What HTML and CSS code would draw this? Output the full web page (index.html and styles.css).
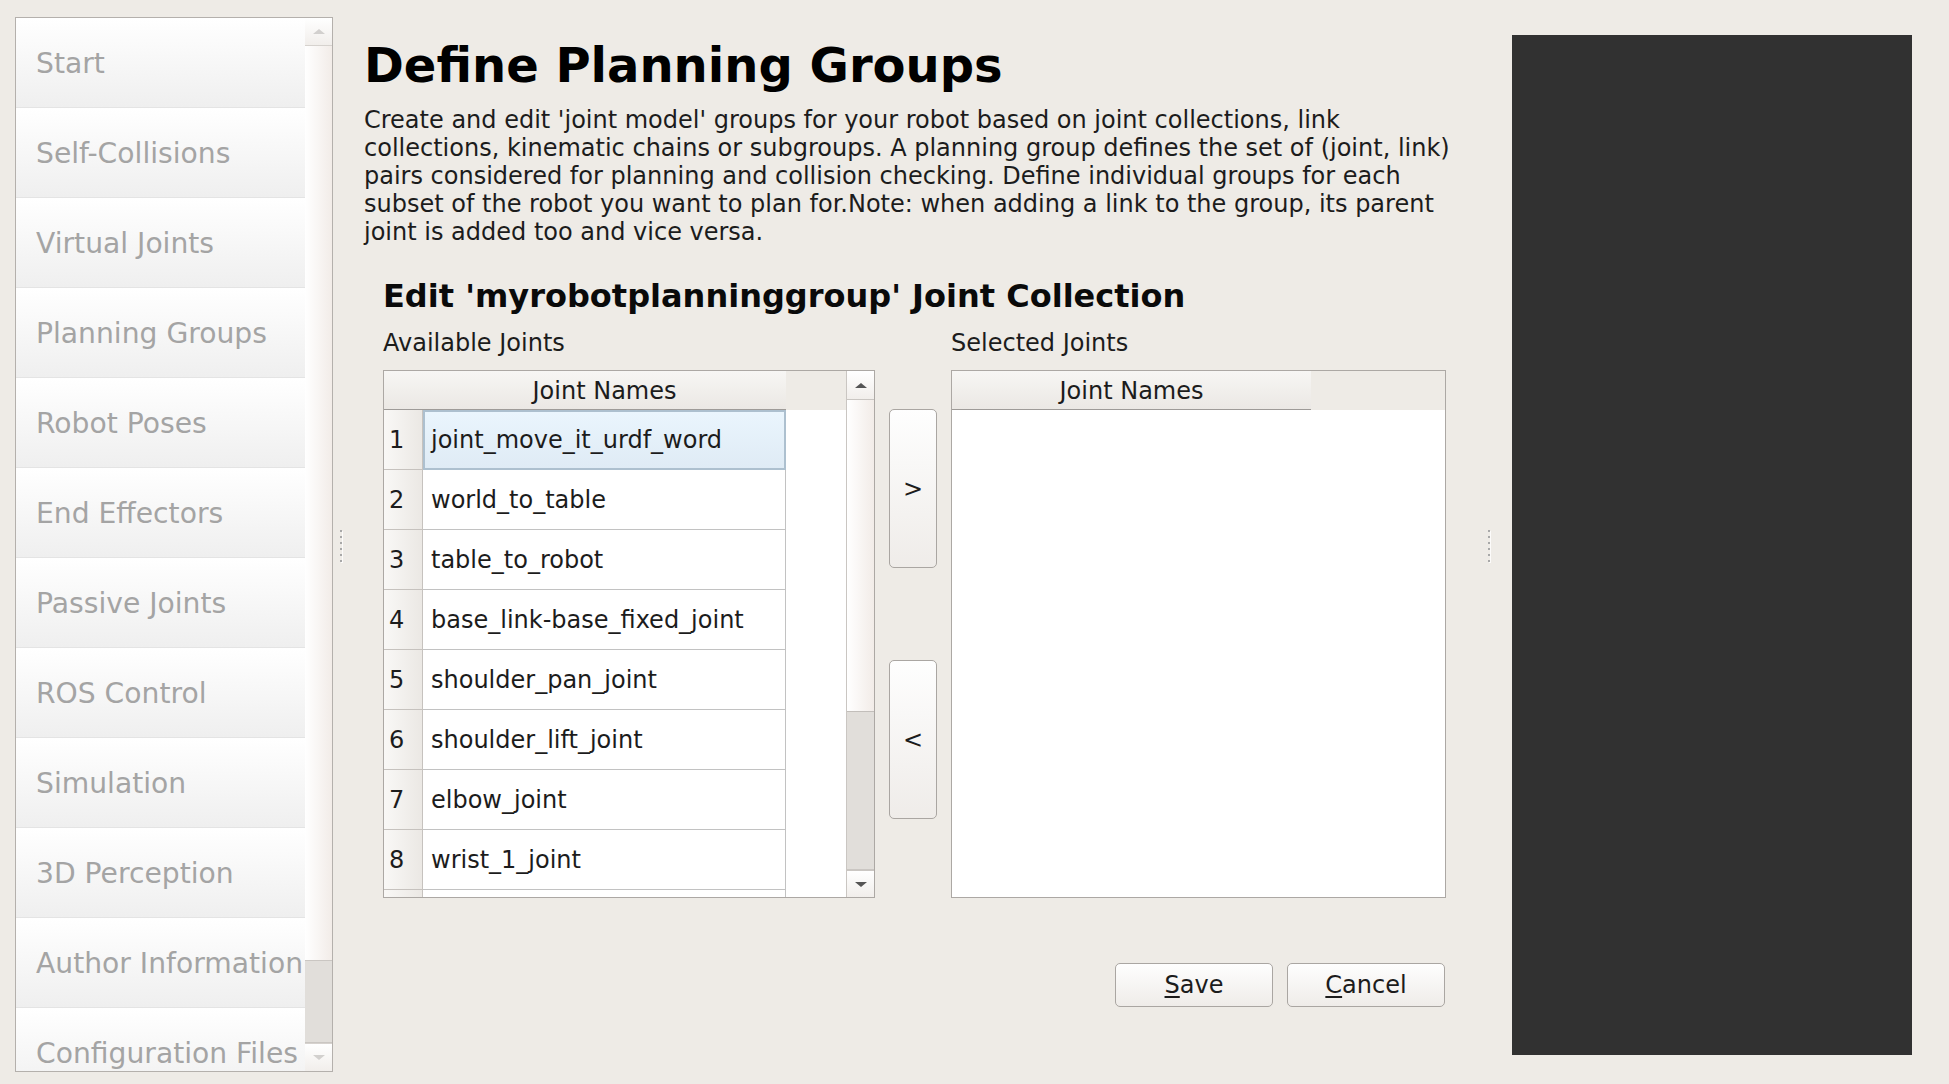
FILE: index.html
```html
<!DOCTYPE html>
<html lang="en">
<head>
<meta charset="utf-8">
<title>MoveIt Setup Assistant - Planning Groups</title>
<link rel="stylesheet" href="styles.css">
</head>
<body>
<div class="app">
  <aside class="nav">
    <div class="nav-list">
      <div class="nav-item">Start</div>
      <div class="nav-item">Self-Collisions</div>
      <div class="nav-item">Virtual Joints</div>
      <div class="nav-item">Planning Groups</div>
      <div class="nav-item">Robot Poses</div>
      <div class="nav-item">End Effectors</div>
      <div class="nav-item">Passive Joints</div>
      <div class="nav-item">ROS Control</div>
      <div class="nav-item">Simulation</div>
      <div class="nav-item">3D Perception</div>
      <div class="nav-item">Author Information</div>
      <div class="nav-item">Configuration Files</div>
    </div>
    <div class="nav-scroll">
      <div class="sb-btn sb-up"><span class="tri-up tri-dis"></span></div>
      <div class="sb-track"></div>
      <div class="sb-handle nav-handle"></div>
      <div class="sb-btn sb-down"><span class="tri-down tri-dis"></span></div>
    </div>
  </aside>

  <div class="splitter s1"><div class="grip"></div></div>

  <main class="content">
    <h1 class="title">Define Planning Groups</h1>
    <p class="desc">Create and edit 'joint model' groups for your robot based on joint collections, link<br>collections, kinematic chains or subgroups. A planning group defines the set of (joint, link)<br>pairs considered for planning and collision checking. Define individual groups for each<br>subset of the robot you want to plan for.Note: when adding a link to the group, its parent<br>joint is added too and vice versa.</p>

    <section class="editor">
      <h2 class="subtitle">Edit 'myrobotplanninggroup' Joint Collection</h2>
      <div class="lists">
        <div class="label">Available Joints</div>
        <div></div>
        <div class="label">Selected Joints</div>

        <div class="table table-left">
          <div class="tview">
            <div class="thead">
              <div class="hcorner"></div>
              <div class="hsec hsec-left">Joint Names</div>
            </div>
            <div class="row sel"><div class="num">1</div><div class="cell">joint_move_it_urdf_word</div></div>
            <div class="row"><div class="num">2</div><div class="cell">world_to_table</div></div>
            <div class="row"><div class="num">3</div><div class="cell">table_to_robot</div></div>
            <div class="row"><div class="num">4</div><div class="cell">base_link-base_fixed_joint</div></div>
            <div class="row"><div class="num">5</div><div class="cell">shoulder_pan_joint</div></div>
            <div class="row"><div class="num">6</div><div class="cell">shoulder_lift_joint</div></div>
            <div class="row"><div class="num">7</div><div class="cell">elbow_joint</div></div>
            <div class="row"><div class="num">8</div><div class="cell">wrist_1_joint</div></div>
            <div class="row"><div class="num"></div><div class="cell"></div></div>
          </div>
          <div class="vscroll">
            <div class="sb-btn tsb-up"><span class="tri-up"></span></div>
            <div class="sb-track"></div>
            <div class="sb-handle table-handle"></div>
            <div class="sb-btn tsb-down"><span class="tri-down"></span></div>
          </div>
        </div>

        <div class="movers">
          <button class="btn mover" type="button">&gt;</button>
          <button class="btn mover" type="button">&lt;</button>
        </div>

        <div class="table table-right">
          <div class="tview">
            <div class="thead">
              <div class="hsec hsec-right">Joint Names</div>
            </div>
          </div>
        </div>
      </div>

      <div class="actions">
        <button class="btn action" type="button"><u>S</u>ave</button>
        <button class="btn action" type="button"><u>C</u>ancel</button>
      </div>
    </section>
  </main>

  <div class="splitter s2"><div class="grip"></div></div>

  <div class="viewer"></div>
</div>
</body>
</html>
```

FILE: styles.css
```css
html, body {
  margin: 0;
  padding: 0;
}

body {
  background: #eeebe6;
  font-family: "DejaVu Sans", "Liberation Sans", sans-serif;
  color: #1c1c1c;
  width: 1949px;
  height: 1084px;
  overflow: hidden;
}

.app {
  display: flex;
  align-items: flex-start;
  height: 1084px;
}

/* ---------- left navigation ---------- */
.nav {
  margin: 17px 0 0 15px;
  width: 318px;
  height: 1055px;
  box-sizing: border-box;
  border: 1px solid #b4b0ac;
  display: flex;
  background: #fff;
  overflow: hidden;
}

.nav-list {
  width: 289px;
  display: flex;
  flex-direction: column;
  overflow: hidden;
}

.nav-item {
  flex: 0 0 90px;
  height: 90px;
  box-sizing: border-box;
  display: flex;
  align-items: center;
  padding-left: 20px;
  padding-top: 2px;
  font-size: 28.2px;
  color: #a4a4a4;
  white-space: nowrap;
  background: linear-gradient(#ffffff, #efefef);
  border-bottom: 1px solid #e4e4e4;
}

.nav-scroll {
  width: 27px;
  display: flex;
  flex-direction: column;
  background: linear-gradient(to right, #ffffff, #f2ece8);
}

.sb-btn {
  display: flex;
  align-items: center;
  justify-content: center;
  box-sizing: border-box;
  background: linear-gradient(#ffffff, #f1eeeb);
}

.sb-up {
  height: 28px;
  border-bottom: 1px solid #d6d2ce;
}

.sb-down {
  height: 28px;
  border-top: 1px solid #d6d2ce;
}

.sb-track {
  flex: 1;
}

.sb-handle {
  box-sizing: border-box;
  background: #e1deda;
  border-top: 1px solid #cac6c2;
  border-bottom: 1px solid #cac6c2;
}

.nav-handle {
  height: 83px;
}

.tri-up,
.tri-down {
  display: block;
  width: 0;
  height: 0;
  border-left: 6px solid transparent;
  border-right: 6px solid transparent;
}

.tri-up {
  border-bottom: 5px solid #555555;
}

.tri-down {
  border-top: 5px solid #555555;
}

.tri-up.tri-dis {
  border-bottom-color: #d2d0ce;
}

.tri-down.tri-dis {
  border-top-color: #d2d0ce;
}

/* ---------- splitters ---------- */
.splitter {
  align-self: stretch;
  display: flex;
  align-items: center;
  box-sizing: border-box;
  padding-top: 8px;
}

.s1 {
  width: 31px;
  padding-left: 7px;
}

.s2 {
  width: 66px;
  padding-left: 42px;
}

.grip {
  width: 2px;
  height: 32px;
  background: repeating-linear-gradient(#a8a8a8 0 2px, transparent 2px 6px);
  box-shadow: 1px 1px 0 rgba(255, 255, 255, 0.8);
}

/* ---------- main content ---------- */
.content {
  width: 1082px;
  box-sizing: border-box;
  padding-top: 37px;
}

.title {
  margin: 0;
  font-size: 48px;
  line-height: 56px;
  font-weight: bold;
  color: #000;
  white-space: nowrap;
}

.desc {
  margin: 13px 0 0;
  font-size: 24px;
  line-height: 28px;
  white-space: nowrap;
}

.editor {
  padding-left: 19px;
}

.subtitle {
  margin: 32px 0 0;
  font-size: 32px;
  line-height: 36px;
  font-weight: bold;
  color: #0a0a0a;
  white-space: nowrap;
}

.lists {
  display: grid;
  grid-template-columns: 492px 48px 495px;
  column-gap: 14px;
  row-gap: 13px;
  margin-top: 15px;
}

.label {
  font-size: 24px;
  line-height: 28px;
}

/* ---------- tables ---------- */
.table {
  height: 528px;
  box-sizing: border-box;
  border: 1px solid #aca8a4;
  background: #fff;
  display: flex;
  overflow: hidden;
}

.tview {
  flex: 1;
  display: flex;
  flex-direction: column;
  overflow: hidden;
}

.thead {
  flex: 0 0 39px;
  height: 39px;
  display: flex;
  background: #eeebe6;
}

.hcorner,
.hsec {
  box-sizing: border-box;
  background: linear-gradient(#f7f6f4, #ebe8e4);
  border-bottom: 1px solid #9e9b98;
}

.hcorner {
  width: 39px;
}

.hsec {
  display: flex;
  align-items: center;
  justify-content: center;
  padding-top: 1px;
  font-size: 24px;
}

.hsec-left {
  width: 363px;
}

.hsec-right {
  width: 359px;
}

.row {
  flex: 0 0 60px;
  height: 60px;
  display: flex;
}

.num {
  width: 39px;
  box-sizing: border-box;
  display: flex;
  align-items: center;
  padding-left: 5px;
  font-size: 24px;
  background: linear-gradient(to right, #f9f8f6, #ebe8e4);
  border-right: 1px solid #c6c2be;
  border-bottom: 1px solid #c6c2be;
}

.cell {
  width: 363px;
  box-sizing: border-box;
  display: flex;
  align-items: center;
  padding-left: 8px;
  font-size: 24px;
  white-space: nowrap;
  overflow: hidden;
  border-right: 1px solid #c2c2c2;
  border-bottom: 1px solid #c2c2c2;
}

.row.sel .cell {
  background: linear-gradient(#eaf5fd, #dfebf5);
  border: 2px solid #adc0cf;
  padding-left: 6px;
}

.vscroll {
  width: 28px;
  box-sizing: border-box;
  border-left: 1px solid #cac6c2;
  display: flex;
  flex-direction: column;
  background: linear-gradient(to right, #ffffff, #f2ece8);
}

.tsb-up {
  height: 29px;
  border-bottom: 1px solid #cac6c2;
}

.tsb-down {
  height: 27px;
  border-top: 1px solid #cac6c2;
}

.table-handle {
  height: 159px;
  border-top: 1px solid #c2beba;
}

/* ---------- buttons ---------- */
.btn {
  font-family: inherit;
  font-size: 24px;
  color: #1c1c1c;
  padding: 0;
  margin: 0;
  box-sizing: border-box;
  border: 1px solid #aaa6a2;
  border-radius: 5px;
  background: linear-gradient(#fefefe, #efece9);
}

.movers {
  display: flex;
  flex-direction: column;
  padding-top: 39px;
  gap: 92px;
}

.mover {
  width: 48px;
  height: 159px;
}

.actions {
  display: flex;
  justify-content: flex-end;
  gap: 14px;
  margin-top: 65px;
  padding-right: 1px;
}

.action {
  width: 158px;
  height: 44px;
}

.action u {
  text-decoration-thickness: 2px;
  text-underline-offset: 3px;
}

/* ---------- 3D viewer ---------- */
.viewer {
  width: 400px;
  height: 1020px;
  margin-top: 35px;
  background: #313131;
}
```
